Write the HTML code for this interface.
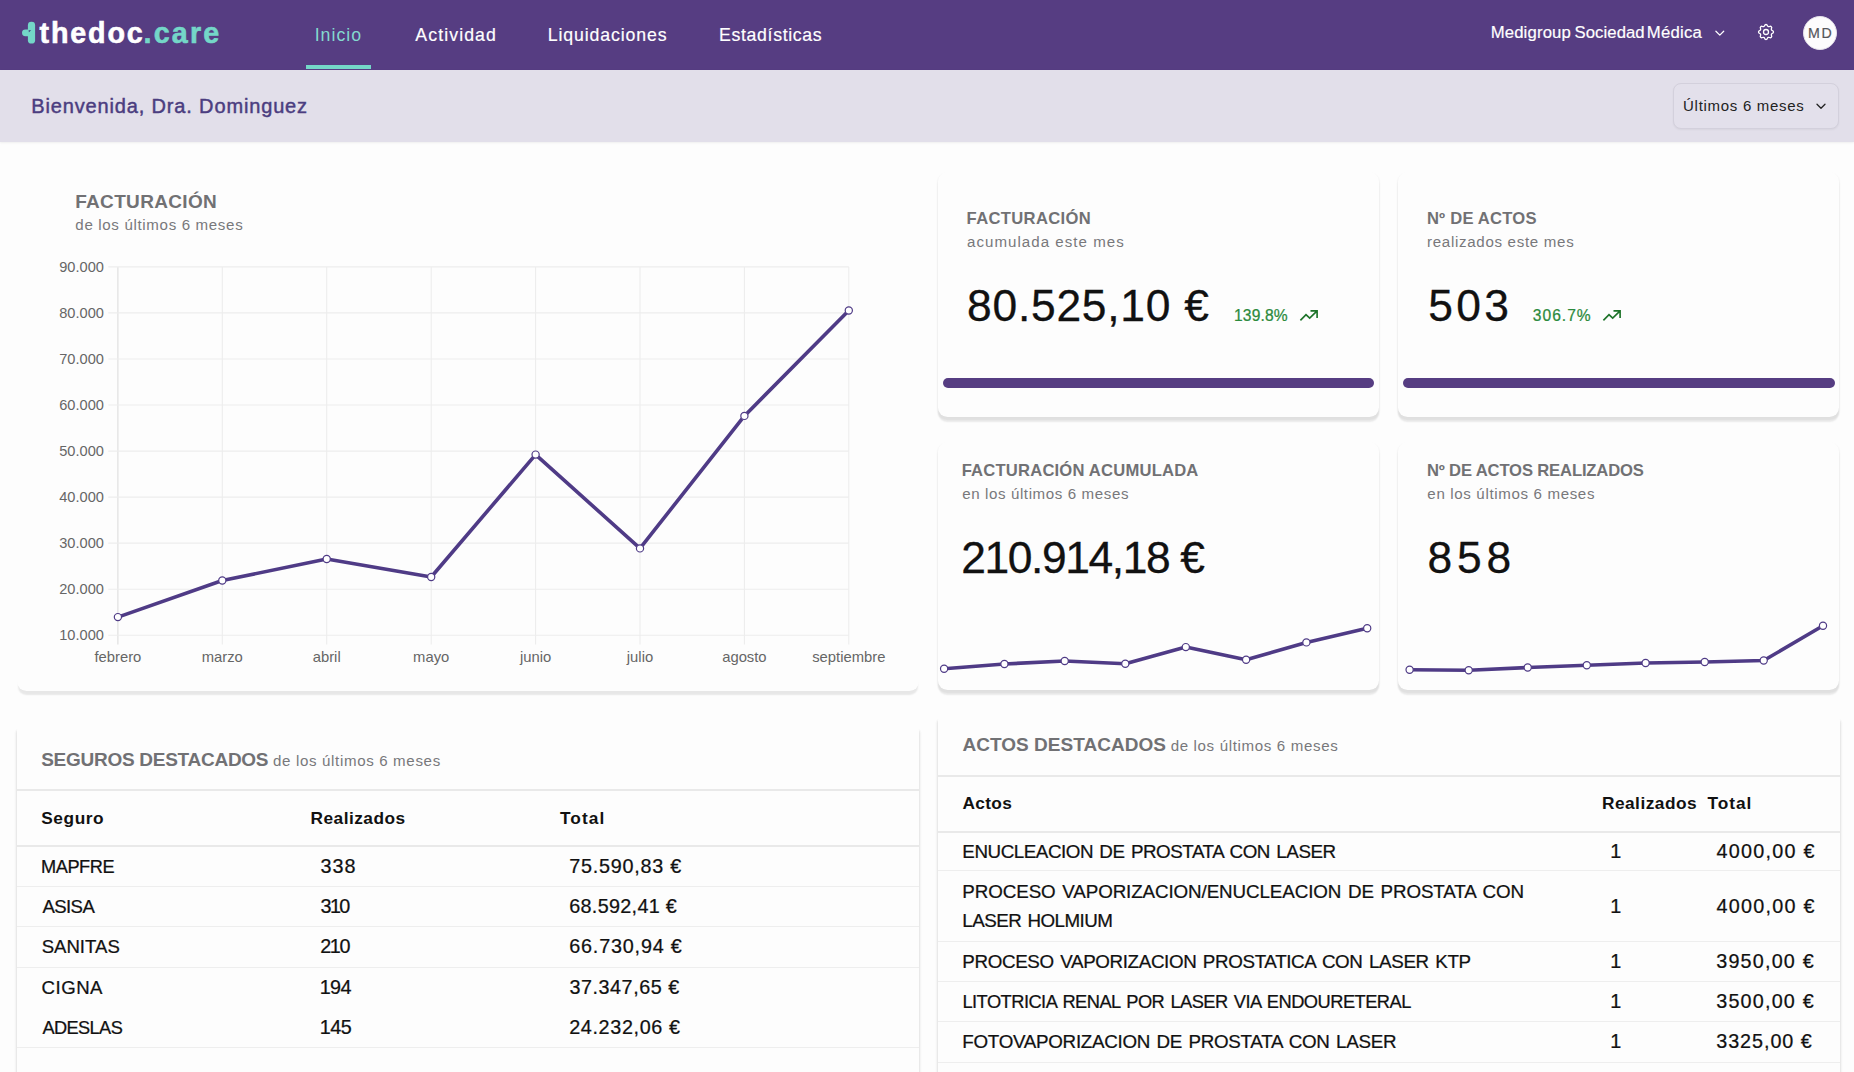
<!DOCTYPE html>
<html lang="es">
<head>
<meta charset="utf-8">
<title>thedoc.care - Inicio</title>
<style>
*{box-sizing:border-box;margin:0;padding:0}
html,body{width:1854px;height:1072px;overflow:hidden;background:#fdfdfd}
body{font-family:"Liberation Sans",sans-serif;position:relative;color:#111}
span,a,h1,h2,h3,p,th,td,div.t{white-space:nowrap}
.abs,.abs>*,header>*,nav>*,.bar>*,section>*,.tbl>*{position:absolute}
header{position:absolute;left:0;top:0;width:1854px;height:69.5px;background:#563d82}
nav{position:absolute;left:0;top:0}
.bar{position:absolute;left:0;top:69.5px;width:1854px;height:72.8px;background:#e2dfea;box-shadow:0 1px 2px rgba(0,0,0,.06)}
section{position:absolute;left:0;top:0}
.card{position:absolute;background:#fdfdfd;border-radius:9.6px;box-shadow:0 4.6px 1.6px -0.5px rgba(0,0,0,.08),0 2px 1.5px 0.2px rgba(0,0,0,.045)}
.card.big{box-shadow:0 5px 1.6px -1.2px rgba(0,0,0,.085)}
.tcard{position:absolute;background:#fdfdfd;border-radius:2px;box-shadow:0 3px 2px 0.8px rgba(0,0,0,.09),0 3px 5px rgba(0,0,0,.04)}
.hl{position:absolute;height:1.8px;background:#e9e9e9}
.rl{position:absolute;height:1px;background:#eeeeee}
.m{-webkit-text-stroke:0.18px currentColor}
.bn{-webkit-text-stroke:0.3px currentColor}
.r{-webkit-text-stroke:0.24px currentColor}
.m2{-webkit-text-stroke:0.45px currentColor}
.sb{-webkit-text-stroke:0.2px currentColor}
svg{position:absolute;overflow:visible}
svg text{font-family:"Liberation Sans",sans-serif}
</style>
</head>
<body>

<header>
<svg style="left:0;top:0" width="60" height="69" viewBox="0 0 60 69" aria-label="logo">
<rect x="22" y="29.4" width="10" height="6.8" rx="3.4" fill="#74d7c8"/>
<rect x="27.9" y="21.8" width="7.2" height="21.8" rx="3.4" fill="#74d7c8"/>
<path d="M28.6 30.2 L31.2 30.2 L28.9 32.2 Z" fill="#3f3c7c"/>
</svg>
<span style="left:39.56px;top:19px;font-size:28.7px;line-height:28.7px;letter-spacing:1.840px;color:#ffffff;font-weight:700;-webkit-text-stroke:0.6px #fff;">thedoc</span>
<span style="left:143.58px;top:19px;font-size:28.7px;line-height:28.7px;letter-spacing:2.146px;color:#74d7c8;font-weight:700;-webkit-text-stroke:0.6px #74d7c8;">.care</span>
<nav>
<a style="left:314.67px;top:27px;font-size:17.7px;line-height:17.7px;letter-spacing:1.028px;color:#84d9cf;">Inicio</a>
<a class="m" style="left:415.36px;top:27px;font-size:17.7px;line-height:17.7px;letter-spacing:1.095px;color:#ffffff;">Actividad</a>
<a class="m" style="left:547.75px;top:27px;font-size:17.7px;line-height:17.7px;letter-spacing:0.895px;color:#ffffff;">Liquidaciones</a>
<a class="m" style="left:719.05px;top:27px;font-size:17.7px;line-height:17.7px;letter-spacing:0.661px;color:#ffffff;">Estadísticas</a>
<i style="left:306px;top:65.3px;width:64.6px;height:4px;background:#74d7c8"></i>
</nav>
<span class="m" style="left:1490.63px;top:25px;font-size:16.7px;line-height:16.7px;letter-spacing:0.168px;color:#ffffff;">Medigroup</span>
<span class="m" style="left:1574.55px;top:25px;font-size:16.7px;line-height:16.7px;letter-spacing:0.069px;color:#ffffff;">Sociedad</span>
<span class="m" style="left:1646.83px;top:25px;font-size:16.7px;line-height:16.7px;letter-spacing:0.222px;color:#ffffff;">Médica</span>
<svg style="left:1713px;top:27px" width="14" height="12" viewBox="0 0 14 12"><path d="M2.9 4.2 L6.8 8.1 L10.7 4.2" fill="none" stroke="#fff" stroke-width="1.25" stroke-linecap="round" stroke-linejoin="round"/></svg>
<svg style="left:1756px;top:22px" width="20" height="20" viewBox="0 0 24 24" fill="none" stroke="#fff" stroke-width="1.55" stroke-linecap="round" stroke-linejoin="round"><path d="M10.325 4.317c.426-1.756 2.924-1.756 3.35 0a1.724 1.724 0 0 0 2.573 1.066c1.543-.94 3.31.826 2.37 2.37a1.724 1.724 0 0 0 1.065 2.572c1.756.426 1.756 2.924 0 3.35a1.724 1.724 0 0 0-1.066 2.573c.94 1.543-.826 3.31-2.37 2.37a1.724 1.724 0 0 0-2.572 1.065c-.426 1.756-2.924 1.756-3.35 0a1.724 1.724 0 0 0-2.573-1.066c-1.543.94-3.31-.826-2.37-2.37a1.724 1.724 0 0 0-1.065-2.572c-1.756-.426-1.756-2.924 0-3.35a1.724 1.724 0 0 0 1.066-2.573c-.94-1.543.826-3.31 2.37-2.37c1 .608 2.296.07 2.572-1.065z"/><circle cx="12" cy="12" r="3"/></svg>
<i style="left:1802.8px;top:15.8px;width:34px;height:34px;border-radius:50%;background:#fdfcfd;border:1.6px solid #e4e0ea"></i>
<span class="m" style="left:1808.04px;top:26px;font-size:14.2px;line-height:14.2px;letter-spacing:1.551px;color:#55555a;">MD</span>
</header>
<div class="bar">
</div>
<h1 class="m2 abs" style="left:31.26px;top:96px;font-size:20.0px;line-height:20.0px;letter-spacing:0.850px;color:#4b3d80;position:absolute;font-weight:400;">Bienvenida, Dra. Dominguez</h1>
<div class="abs" style="left:1673.2px;top:83.2px;width:165.6px;height:45.4px;border:1.2px solid #d3d0dc;border-radius:8px;background:#e3e0eb;box-shadow:0 1px 2px rgba(0,0,0,.05)"></div>
<span style="left:1683.05px;top:98px;font-size:15.0px;line-height:15.0px;letter-spacing:0.709px;color:#222;position:absolute;">Últimos 6 meses</span>
<svg style="left:1814px;top:100px" width="14" height="12" viewBox="0 0 14 12"><path d="M3.0 4.2 L7.0 8.2 L11.0 4.2" fill="none" stroke="#222" stroke-width="1.3" stroke-linecap="round" stroke-linejoin="round"/></svg>
<main>
<section>
<div class="card big" style="left:17.3px;top:172px;width:901.5px;height:518.5px"></div>
<h2 style="left:75.15px;top:192px;font-size:19.0px;line-height:19.0px;letter-spacing:0.336px;color:#717174;font-weight:700;position:absolute;">FACTURACIÓN</h2>
<p style="left:75.37px;top:217px;font-size:15.1px;line-height:15.1px;letter-spacing:0.657px;color:#78787b;position:absolute;">de los últimos 6 meses</p>
<svg style="left:0;top:0" width="930" height="700" viewBox="0 0 930 700">
<g stroke="#ededed" stroke-width="1.1" fill="none">
<path d="M117.9 266.9V644.4" stroke="#dddddd"/>
<path d="M222.3 266.9V644.4"/>
<path d="M326.7 266.9V644.4"/>
<path d="M431.2 266.9V644.4"/>
<path d="M535.6 266.9V644.4"/>
<path d="M640.0 266.9V644.4"/>
<path d="M744.4 266.9V644.4"/>
<path d="M848.8 266.9V644.4"/>
<path d="M108.3 266.9H848.9"/>
<path d="M108.3 312.9H848.9"/>
<path d="M108.3 359.0H848.9"/>
<path d="M108.3 405.0H848.9"/>
<path d="M108.3 451.1H848.9"/>
<path d="M108.3 497.1H848.9"/>
<path d="M108.3 543.1H848.9"/>
<path d="M108.3 589.2H848.9"/>
<path d="M108.3 635.2H848.9"/>
</g>
<g font-size="14.6" fill="#666" text-anchor="end">
<text x="103.9" y="271.9">90.000</text>
<text x="103.9" y="317.9">80.000</text>
<text x="103.9" y="364.0">70.000</text>
<text x="103.9" y="410.0">60.000</text>
<text x="103.9" y="456.1">50.000</text>
<text x="103.9" y="502.1">40.000</text>
<text x="103.9" y="548.1">30.000</text>
<text x="103.9" y="594.2">20.000</text>
<text x="103.9" y="640.2">10.000</text>
</g>
<g font-size="14.8" fill="#666" text-anchor="middle">
<text x="117.9" y="661.8">febrero</text>
<text x="222.3" y="661.8">marzo</text>
<text x="326.7" y="661.8">abril</text>
<text x="431.2" y="661.8">mayo</text>
<text x="535.6" y="661.8">junio</text>
<text x="640.0" y="661.8">julio</text>
<text x="744.4" y="661.8">agosto</text>
<text x="848.8" y="661.8">septiembre</text>
</g>
<polyline points="117.9,617.1 222.3,580.5 326.7,559.0 431.2,577.0 535.6,454.6 640.0,548.4 744.4,415.9 848.8,310.5" fill="none" stroke="#4f3b86" stroke-width="3.6" stroke-linejoin="round" stroke-linecap="round"/>
<g fill="#fff" stroke="#4f3b86" stroke-width="1.2">
<circle cx="117.9" cy="617.1" r="3.6"/>
<circle cx="222.3" cy="580.5" r="3.6"/>
<circle cx="326.7" cy="559.0" r="3.6"/>
<circle cx="431.2" cy="577.0" r="3.6"/>
<circle cx="535.6" cy="454.6" r="3.6"/>
<circle cx="640.0" cy="548.4" r="3.6"/>
<circle cx="744.4" cy="415.9" r="3.6"/>
<circle cx="848.8" cy="310.5" r="3.6"/>
</g></svg>
</section>
<section>
<div class="card" style="left:937.8px;top:172px;width:441.7px;height:244.5px"></div>
<h3 style="left:966.60px;top:211px;font-size:16.6px;line-height:16.6px;letter-spacing:0.341px;color:#717174;font-weight:700;position:absolute;">FACTURACIÓN</h3>
<p style="left:967.07px;top:234px;font-size:15.1px;line-height:15.1px;letter-spacing:1.021px;color:#78787b;position:absolute;">acumulada este mes</p>
<span class="bn" style="left:967.09px;top:284px;font-size:44.4px;line-height:44.4px;letter-spacing:0.727px;color:#111111;">80.525,10 €</span>
<span class="r" style="left:1234.01px;top:308px;font-size:15.6px;line-height:15.6px;letter-spacing:0.166px;color:#2b8a3c;">139.8%</span>
<svg style="left:1299.2px;top:309px" width="22" height="14" viewBox="0 0 22 14"><path d="M1.4 11.4 L7.0 5.6 L10.7 9.2 L18.1 1.9 M11.5 1.9 H18.1 V8.9" fill="none" stroke="#1d7329" stroke-width="1.65" stroke-linecap="butt" stroke-linejoin="miter"/></svg>
<i style="left:942.8px;top:378px;width:431.3px;height:9.6px;border-radius:5px;background:#563d82"></i>
</section>
<section>
<div class="card" style="left:1397.8px;top:172px;width:441.7px;height:244.5px"></div>
<h3 style="left:1426.90px;top:211px;font-size:16.6px;line-height:16.6px;letter-spacing:0.212px;color:#717174;font-weight:700;position:absolute;">Nº DE ACTOS</h3>
<p style="left:1427.00px;top:234px;font-size:15.1px;line-height:15.1px;letter-spacing:0.692px;color:#78787b;position:absolute;">realizados este mes</p>
<span class="bn" style="left:1428.22px;top:284px;font-size:44.4px;line-height:44.4px;letter-spacing:3.363px;color:#111111;">503</span>
<span class="r" style="left:1532.81px;top:308px;font-size:15.6px;line-height:15.6px;letter-spacing:1.008px;color:#2b8a3c;">306.7%</span>
<svg style="left:1601.8px;top:309px" width="22" height="14" viewBox="0 0 22 14"><path d="M1.4 11.4 L7.0 5.6 L10.7 9.2 L18.1 1.9 M11.5 1.9 H18.1 V8.9" fill="none" stroke="#1d7329" stroke-width="1.65" stroke-linecap="butt" stroke-linejoin="miter"/></svg>
<i style="left:1403.4px;top:378px;width:431.2px;height:9.6px;border-radius:5px;background:#563d82"></i>
</section>
<section>
<div class="card" style="left:937.8px;top:441.5px;width:441.7px;height:248px"></div>
<h3 style="left:961.70px;top:463px;font-size:16.6px;line-height:16.6px;letter-spacing:0.202px;color:#717174;font-weight:700;position:absolute;">FACTURACIÓN ACUMULADA</h3>
<p style="left:962.17px;top:486px;font-size:15.1px;line-height:15.1px;letter-spacing:0.609px;color:#78787b;position:absolute;">en los últimos 6 meses</p>
<span class="bn" style="left:961.18px;top:536px;font-size:44.4px;line-height:44.4px;letter-spacing:-1.401px;color:#111111;">210.914,18 €</span>
<svg style="left:0;top:0" width="1854" height="700" viewBox="0 0 1854 700">
<polyline points="944.1,668.7 1004.4,664.0 1064.7,661.0 1125.3,663.8 1185.8,647.1 1246.1,659.8 1306.4,642.4 1367.2,628.3" fill="none" stroke="#4f3b86" stroke-width="3.6" stroke-linejoin="round" stroke-linecap="round"/>
<g fill="#fff" stroke="#4f3b86" stroke-width="1.2">
<circle cx="944.1" cy="668.7" r="3.6"/>
<circle cx="1004.4" cy="664.0" r="3.6"/>
<circle cx="1064.7" cy="661.0" r="3.6"/>
<circle cx="1125.3" cy="663.8" r="3.6"/>
<circle cx="1185.8" cy="647.1" r="3.6"/>
<circle cx="1246.1" cy="659.8" r="3.6"/>
<circle cx="1306.4" cy="642.4" r="3.6"/>
<circle cx="1367.2" cy="628.3" r="3.6"/>
</g></svg>
</section>
<section>
<div class="card" style="left:1397.8px;top:441.5px;width:441.7px;height:248px"></div>
<h3 style="left:1426.90px;top:463px;font-size:16.6px;line-height:16.6px;letter-spacing:-0.142px;color:#717174;font-weight:700;position:absolute;">Nº DE ACTOS REALIZADOS</h3>
<p style="left:1427.37px;top:486px;font-size:15.1px;line-height:15.1px;letter-spacing:0.647px;color:#78787b;position:absolute;">en los últimos 6 meses</p>
<span class="bn" style="left:1427.39px;top:536px;font-size:44.4px;line-height:44.4px;letter-spacing:4.930px;color:#111111;">858</span>
<svg style="left:0;top:0" width="1854" height="700" viewBox="0 0 1854 700">
<polyline points="1409.6,669.7 1468.7,670.2 1527.7,667.5 1586.8,665.3 1645.6,663.0 1704.7,662.0 1763.7,660.5 1823.0,625.8" fill="none" stroke="#4f3b86" stroke-width="3.6" stroke-linejoin="round" stroke-linecap="round"/>
<g fill="#fff" stroke="#4f3b86" stroke-width="1.2">
<circle cx="1409.6" cy="669.7" r="3.6"/>
<circle cx="1468.7" cy="670.2" r="3.6"/>
<circle cx="1527.7" cy="667.5" r="3.6"/>
<circle cx="1586.8" cy="665.3" r="3.6"/>
<circle cx="1645.6" cy="663.0" r="3.6"/>
<circle cx="1704.7" cy="662.0" r="3.6"/>
<circle cx="1763.7" cy="660.5" r="3.6"/>
<circle cx="1823.0" cy="625.8" r="3.6"/>
</g></svg>
</section>
<section>
<div class="tcard" style="left:17.2px;top:728px;width:901.6px;height:360px"></div>
<h2 style="left:41.17px;top:750px;font-size:19.0px;line-height:19.0px;letter-spacing:-0.266px;color:#717174;font-weight:700;position:absolute;">SEGUROS DESTACADOS</h2>
<span style="left:272.97px;top:753px;font-size:15.1px;line-height:15.1px;letter-spacing:0.652px;color:#78787b;">de los últimos 6 meses</span>
<i class="hl" style="left:17.2px;top:789.3px;width:901.6px"></i>
<span style="left:41.22px;top:810px;font-size:17.3px;line-height:17.3px;letter-spacing:0.572px;color:#111111;font-weight:700;">Seguro</span>
<span style="left:310.46px;top:810px;font-size:17.3px;line-height:17.3px;letter-spacing:0.495px;color:#111111;font-weight:700;">Realizados</span>
<span style="left:560.01px;top:810px;font-size:17.3px;line-height:17.3px;letter-spacing:1.063px;color:#111111;font-weight:700;">Total</span>
<i class="hl" style="left:17.2px;top:845.2px;width:901.6px"></i>
<span class="r" style="left:41.01px;top:858px;font-size:18.2px;line-height:18.2px;letter-spacing:-0.437px;color:#111111;">MAPFRE</span>
<span class="r" style="left:320.45px;top:857px;font-size:19.8px;line-height:19.8px;letter-spacing:1.039px;color:#111111;">338</span>
<span class="r" style="left:569.19px;top:857px;font-size:19.8px;line-height:19.8px;letter-spacing:0.768px;color:#111111;">75.590,83 €</span>
<span class="r" style="left:42.46px;top:898px;font-size:18.6px;line-height:18.6px;letter-spacing:-0.605px;color:#111111;">ASISA</span>
<span class="r" style="left:320.45px;top:897px;font-size:19.8px;line-height:19.8px;letter-spacing:-1.561px;color:#111111;">310</span>
<span class="r" style="left:569.21px;top:897px;font-size:19.8px;line-height:19.8px;letter-spacing:0.316px;color:#111111;">68.592,41 €</span>
<span class="r" style="left:41.66px;top:938px;font-size:18.6px;line-height:18.6px;letter-spacing:-0.007px;color:#111111;">SANITAS</span>
<span class="r" style="left:320.21px;top:937px;font-size:19.8px;line-height:19.8px;letter-spacing:-1.392px;color:#111111;">210</span>
<span class="r" style="left:569.21px;top:937px;font-size:19.8px;line-height:19.8px;letter-spacing:0.816px;color:#111111;">66.730,94 €</span>
<span class="r" style="left:41.57px;top:979px;font-size:18.6px;line-height:18.6px;letter-spacing:0.515px;color:#111111;">CIGNA</span>
<span class="r" style="left:319.70px;top:978px;font-size:19.8px;line-height:19.8px;letter-spacing:-0.574px;color:#111111;">194</span>
<span class="r" style="left:569.45px;top:978px;font-size:19.8px;line-height:19.8px;letter-spacing:0.533px;color:#111111;">37.347,65 €</span>
<span class="r" style="left:42.46px;top:1019px;font-size:18.2px;line-height:18.2px;letter-spacing:-0.600px;color:#111111;">ADESLAS</span>
<span class="r" style="left:319.70px;top:1018px;font-size:19.8px;line-height:19.8px;letter-spacing:-0.455px;color:#111111;">145</span>
<span class="r" style="left:569.21px;top:1018px;font-size:19.8px;line-height:19.8px;letter-spacing:0.636px;color:#111111;">24.232,06 €</span>
<i class="rl" style="left:17.2px;top:886.0px;width:901.6px"></i>
<i class="rl" style="left:17.2px;top:926.4px;width:901.6px"></i>
<i class="rl" style="left:17.2px;top:966.9px;width:901.6px"></i>
<i class="rl" style="left:17.2px;top:1046.8px;width:901.6px"></i>
</section>
<section>
<div class="tcard" style="left:938.0px;top:717.5px;width:901.6px;height:370px"></div>
<h2 style="left:962.54px;top:735px;font-size:19.0px;line-height:19.0px;letter-spacing:0.024px;color:#717174;font-weight:700;position:absolute;">ACTOS DESTACADOS</h2>
<span style="left:1170.67px;top:738px;font-size:15.1px;line-height:15.1px;letter-spacing:0.647px;color:#78787b;">de los últimos 6 meses</span>
<i class="hl" style="left:938px;top:774.8px;width:901.6px"></i>
<span style="left:962.58px;top:795px;font-size:17.3px;line-height:17.3px;letter-spacing:0.287px;color:#111111;font-weight:700;">Actos</span>
<span style="left:1601.96px;top:795px;font-size:17.3px;line-height:17.3px;letter-spacing:0.484px;color:#111111;font-weight:700;">Realizados</span>
<span style="left:1707.61px;top:795px;font-size:17.3px;line-height:17.3px;letter-spacing:0.913px;color:#111111;font-weight:700;">Total</span>
<i class="hl" style="left:938px;top:830.9px;width:901.6px"></i>
<span class="r" style="left:962.36px;top:843px;font-size:18.8px;line-height:18.8px;letter-spacing:-0.457px;color:#111111;word-spacing:1.6px;">ENUCLEACION DE PROSTATA CON LASER</span>
<span class="r" style="left:1610.20px;top:842px;font-size:19.8px;line-height:19.8px;letter-spacing:0.000px;color:#111111;">1</span>
<span class="r" style="left:1716.56px;top:842px;font-size:19.8px;line-height:19.8px;letter-spacing:1.240px;color:#111111;">4000,00 €</span>
<span class="r" style="left:962.36px;top:883px;font-size:18.8px;line-height:18.8px;letter-spacing:-0.103px;color:#111111;word-spacing:1.6px;">PROCESO VAPORIZACION/ENUCLEACION DE PROSTATA CON</span>
<span class="r" style="left:1610.20px;top:897px;font-size:19.8px;line-height:19.8px;letter-spacing:0.000px;color:#111111;">1</span>
<span class="r" style="left:1716.56px;top:897px;font-size:19.8px;line-height:19.8px;letter-spacing:1.240px;color:#111111;">4000,00 €</span>
<span class="r" style="left:962.36px;top:953px;font-size:18.8px;line-height:18.8px;letter-spacing:-0.361px;color:#111111;word-spacing:1.6px;">PROCESO VAPORIZACION PROSTATICA CON LASER KTP</span>
<span class="r" style="left:1610.20px;top:952px;font-size:19.8px;line-height:19.8px;letter-spacing:0.000px;color:#111111;">1</span>
<span class="r" style="left:1716.25px;top:952px;font-size:19.8px;line-height:19.8px;letter-spacing:1.180px;color:#111111;">3950,00 €</span>
<span class="r" style="left:962.40px;top:993px;font-size:18.3px;line-height:18.3px;letter-spacing:-0.531px;color:#111111;word-spacing:1.6px;">LITOTRICIA RENAL POR LASER VIA ENDOURETERAL</span>
<span class="r" style="left:1610.20px;top:992px;font-size:19.8px;line-height:19.8px;letter-spacing:0.000px;color:#111111;">1</span>
<span class="r" style="left:1716.25px;top:992px;font-size:19.8px;line-height:19.8px;letter-spacing:1.180px;color:#111111;">3500,00 €</span>
<span class="r" style="left:962.36px;top:1033px;font-size:18.8px;line-height:18.8px;letter-spacing:-0.296px;color:#111111;word-spacing:1.6px;">FOTOVAPORIZACION DE PROSTATA CON LASER</span>
<span class="r" style="left:1610.20px;top:1032px;font-size:19.8px;line-height:19.8px;letter-spacing:0.000px;color:#111111;">1</span>
<span class="r" style="left:1716.25px;top:1032px;font-size:19.8px;line-height:19.8px;letter-spacing:0.930px;color:#111111;">3325,00 €</span>
<span class="r" style="left:962.36px;top:912px;font-size:18.8px;line-height:18.8px;letter-spacing:-0.555px;color:#111111;word-spacing:1.6px;">LASER HOLMIUM</span>
<i class="rl" style="left:938px;top:870.4px;width:901.6px"></i>
<i class="rl" style="left:938px;top:940.6px;width:901.6px"></i>
<i class="rl" style="left:938px;top:980.9px;width:901.6px"></i>
<i class="rl" style="left:938px;top:1021.4px;width:901.6px"></i>
<i class="rl" style="left:938px;top:1061.6px;width:901.6px"></i>
</section>
</main>
</body></html>
